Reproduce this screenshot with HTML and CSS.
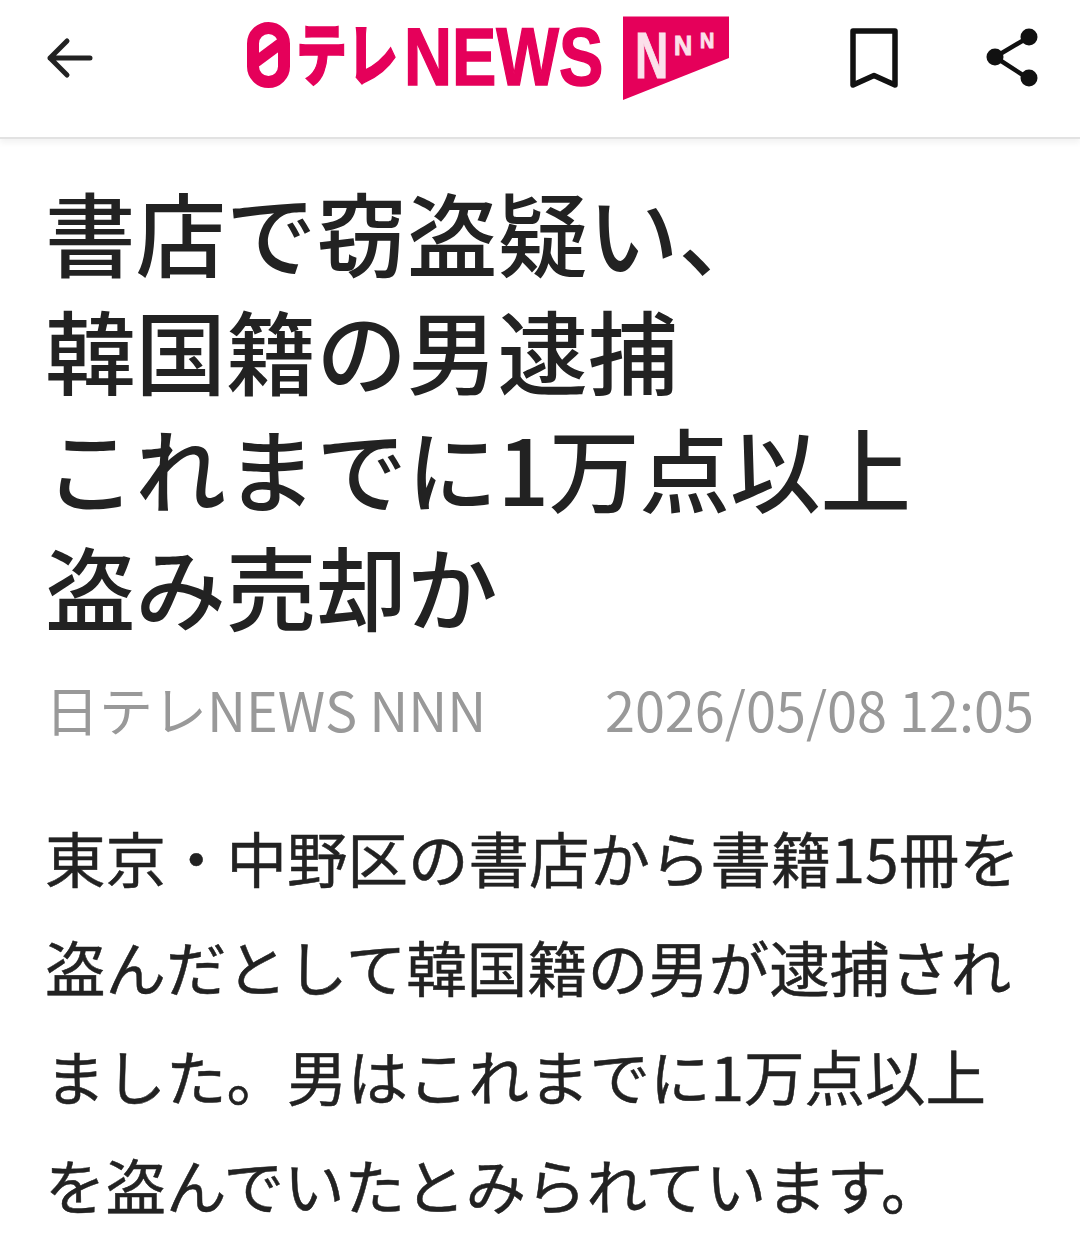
FILE: index.html
```html
<!DOCTYPE html>
<html lang="ja">
<head>
  <title>日テレNEWS NNN</title>
  <link rel="stylesheet" href="styles.css">
</head>
<body>
  <header class="top-bar">
    <svg class="icon-back" width="48" height="48" viewBox="0 0 48 48">
      <path d="M44 24H4M21 7L4 24l17 17" fill="none" stroke="#222" stroke-width="5" stroke-linecap="round" stroke-linejoin="round"/>
    </svg>
    <svg class="logo" width="488" height="88" viewBox="0 0 488 88">
      <rect x="9" y="14" width="31" height="54" rx="15.500" fill="none" stroke="#e5005a" stroke-width="12"/>
      <path d="M9 50L40 27" stroke="#e5005a" stroke-width="11"/>
      <text class="logo-kana" transform="translate(52 66) scale(.75 1)">テレ</text>
      <text class="logo-news" transform="translate(160 71) scale(.81 1)">NEWS</text>
      <path d="M379 2.500H485V44L379 86Z" fill="#e5005a"/>
      <text class="logo-n n1" transform="translate(391 64) scale(.72 1)">N</text>
      <text class="logo-n n2" transform="translate(430 41) scale(.9 1)">N</text>
      <text class="logo-n n3" transform="translate(456 34) scale(.9 1)">N</text>
    </svg>
    <svg class="icon-save" width="48" height="60" viewBox="0 0 48 60">
      <path d="M3 3H45V57L24 47.500 3 57Z" fill="none" stroke="#111" stroke-width="5.500" stroke-linejoin="round"/>
    </svg>
    <svg class="icon-share" width="54" height="62" viewBox="0 0 54 62">
      <path d="M44 10L10 30 44 52" fill="none" stroke="#111" stroke-width="4.500"/>
      <circle cx="44" cy="10" r="8.500" fill="#111"/>
      <circle cx="10" cy="30" r="8.500" fill="#111"/>
      <circle cx="44" cy="51" r="8.500" fill="#111"/>
    </svg>
  </header>

  <main class="article">
    <h1>書店で窃盗疑い、<br>韓国籍の男逮捕<br>これまでに1万点以上<br>盗み売却か</h1>
    <div class="meta">
      <span>日テレNEWS NNN</span>
      <span>2026/05/08 12:05</span>
    </div>
    <p class="body-text">東京・中野区の書店から書籍15冊を盗んだとして韓国籍の男が逮捕されました。男はこれまでに1万点以上を盗んでいたとみられています。</p>
  </main>
</body>
</html>
```

FILE: styles.css
```css
* {
  box-sizing: border-box;
  margin: 0;
  padding: 0;
}
body {
  font-family: "Noto Sans CJK JP", "Noto Sans", sans-serif;
  background-color: #fff;
  color: #222;
  overflow: hidden;
}
.top-bar {
  height: 139px;
  display: flex;
  align-items: center;
  padding: 0 41px 22px 46px;
  border-bottom: 2px solid #e2e2e2;
  box-shadow: 0 4px 6px rgba(0, 0, 0, 0.05);
}
.logo {
  margin-left: 150px;
  margin-right: 118px;
  overflow: visible;
}
.logo text {
  fill: #e5005a;
}
.logo .logo-n {
  fill: #fbe0ea;
  stroke: #fbe0ea;
  stroke-width: 1px;
  font-family: "Liberation Sans", sans-serif;
  font-weight: 700;
}
.n1 { font-size: 64px; }
.n2 { font-size: 28px; }
.n3 { font-size: 22px; }
.logo-kana {
  font-family: "Noto Sans CJK JP", sans-serif;
  font-weight: 900;
  font-size: 68px;
  stroke: #e5005a;
  stroke-width: 1.500px;
}
.logo-news {
  font-family: "Liberation Sans", sans-serif;
  font-weight: 700;
  font-size: 82px;
  stroke: #e5005a;
  stroke-width: 1.500px;
}
.icon-save {
  margin-right: 87px;
}
.article {
  padding: 33px 40px 0 45px;
}
h1 {
  font-size: 90.500px;
  font-weight: 500;
  line-height: 118px;
  color: #222;
}
.meta {
  display: flex;
  justify-content: space-between;
  margin-top: 30px;
  margin-right: 6px;
  font-size: 54px;
  line-height: 70px;
  color: #999;
}
.body-text {
  margin-top: 58px;
  font-size: 60.500px;
  line-height: 109px;
  color: #222;
  -webkit-text-stroke: 0.5px #222;
}
```
